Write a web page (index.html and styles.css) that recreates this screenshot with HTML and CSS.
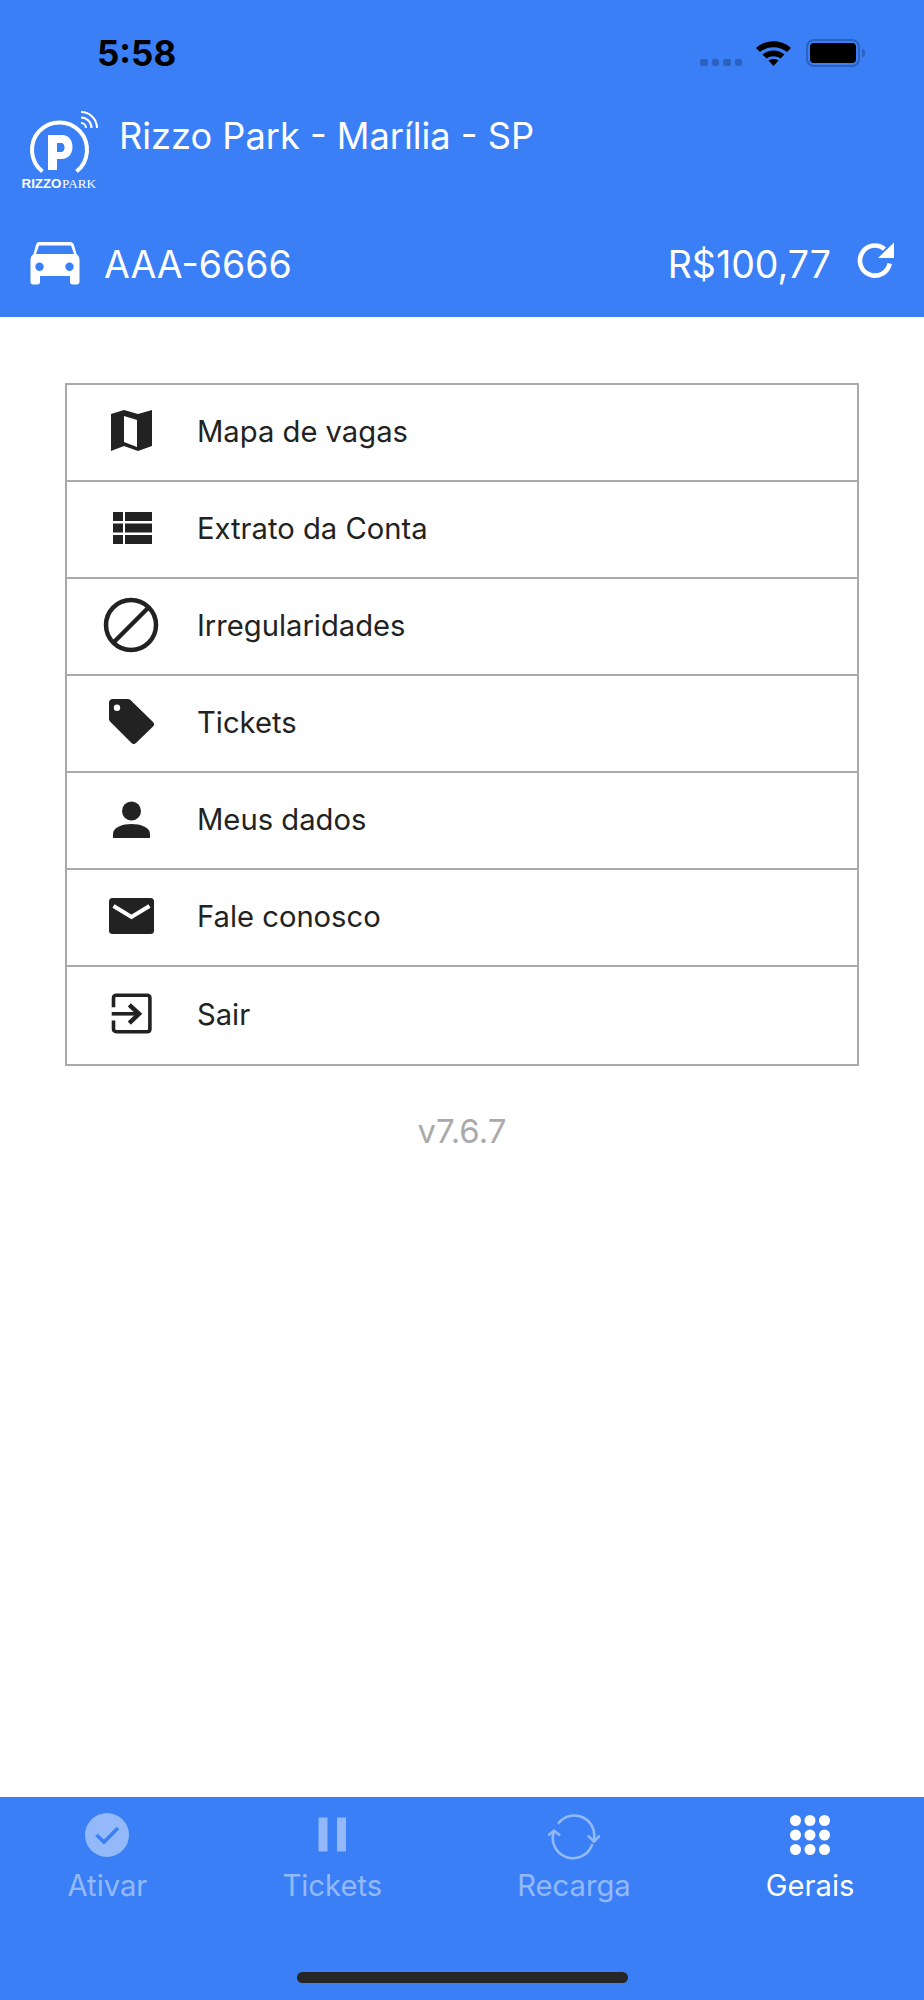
FILE: index.html
```html
<!DOCTYPE html>
<html lang="pt-BR">
<head>
<meta charset="UTF-8">
<title>Rizzo Park</title>
<link rel="stylesheet" href="styles.css">
</head>
<body>

<div class="app">
  <header class="top">
    <div class="status-bar">
      <span class="clock">5:58</span>
      <div class="status-icons">
        <div class="signal"><i></i><i></i><i></i><i></i></div>
        <svg class="wifi" width="37" height="28" viewBox="0 0 36 28">
          <path d="M0.5 9 C10 0 26 0 35.5 9 L31.5 13 C24 6.5 12 6.5 4.500 13 Z"/>
          <path d="M7 15.500 C13.500 10 22.500 10 29 15.500 L25 19.500 C21 16.500 15 16.500 11 19.500 Z"/>
          <path d="M13 21.500 C16 19.500 20 19.500 23 21.500 L18 27 Z"/>
        </svg>
        <div class="battery"><div class="battery-fill"></div></div>
      </div>
    </div>

    <div class="brand">
      <svg class="logo" width="80" height="80" viewBox="20 110 80 80">
        <path d="M42.500 171.500 A27.500 27.500 0 1 1 76.500 171.500" fill="none" stroke="#fff" stroke-width="4"/>
        <path fill="#fff" fill-rule="evenodd" d="M48 135 H62 C69 135 72.500 140 72.500 147 C72.500 154 68 159 62 159 H57 V170 H48 Z M57 143 V152 H61 C63.500 152 64.500 150 64.500 147.500 C64.500 145 63.500 143 61 143 Z"/>
        <g fill="none" stroke="#fff" stroke-width="2">
          <path d="M81 123 A5 5 0 0 1 86 128"/>
          <path d="M81 117.500 A10.500 10.500 0 0 1 91.500 128"/>
          <path d="M81 112 A16 16 0 0 1 97 128"/>
        </g>
        <text class="logo-bold" x="21.500" y="188" textLength="40" lengthAdjust="spacingAndGlyphs">RIZZO</text>
        <text class="logo-light" x="62" y="188" textLength="34" lengthAdjust="spacingAndGlyphs">PARK</text>
      </svg>
      <span class="brand-name">Rizzo Park - Marília - SP</span>
    </div>

    <div class="account">
      <svg class="car" width="50" height="44" viewBox="0 0 50 44">
        <path fill="#fff" fill-rule="evenodd" d="M9 1 H40 C42 1 43.500 2 44 4 L46.500 13 C48.500 14.500 49.500 16 49.500 19 V41 C49.500 42.500 48.500 43.500 47 43.500 H42.500 C41 43.500 40 42.500 40 41 V35 H10 V41 C10 42.500 9 43.500 7.500 43.500 H3 C1.500 43.500 0.500 42.500 0.500 41 V19 C0.500 16 1.500 14.500 3.500 13 L6 4 C6.500 2 7.500 1 9 1 Z M9 4.500 L6 13 H44 L41 4.500 Z M9.500 21.500 A4.200 4.200 0 1 0 9.500 29.900 A4.200 4.200 0 1 0 9.500 21.500 Z M39.500 21.500 A4.200 4.200 0 1 0 39.500 29.900 A4.200 4.200 0 1 0 39.500 21.500 Z"/>
      </svg>
      <span class="plate">AAA-6666</span>
      <span class="balance">R$100,77</span>
      <svg class="refresh" width="38" height="38" viewBox="0 0 38 38">
        <path fill="none" stroke="#fff" stroke-width="4.600" d="M27.500 8 A15 15 0 1 0 32.700 22.500"/>
        <path fill="#fff" d="M37 1.500 V17 H21 Z"/>
      </svg>
    </div>
  </header>

  <main class="content">
    <ul class="menu">
      <li class="menu-row">
        <svg class="menu-icon" viewBox="0 0 64 64">
          <path fill-rule="evenodd" d="M12 13 L25 9 L39 13 L53 9 V45 L39 50 L25 45 L12 50 Z M25 15 V41 L38 46 V19 Z"/>
        </svg>
        <span>Mapa de vagas</span>
      </li>
      <li class="menu-row">
        <svg class="menu-icon" viewBox="0 0 64 64">
          <path d="M14 14 H24 V23 H14 Z M26 14 H53 V23 H26 Z M14 25.500 H24 V34.500 H14 Z M26 25.500 H53 V34.500 H26 Z M14 37 H24 V46 H14 Z M26 37 H53 V46 H26 Z"/>
        </svg>
        <span>Extrato da Conta</span>
      </li>
      <li class="menu-row">
        <svg class="menu-icon" viewBox="0 0 64 64">
          <circle cx="32" cy="30" r="25" fill="none" stroke="#222" stroke-width="4.500"/>
          <path d="M14.500 47.500 L49.500 12.500" stroke="#222" stroke-width="4.500"/>
        </svg>
        <span>Irregularidades</span>
      </li>
      <li class="menu-row">
        <svg class="menu-icon" viewBox="0 0 64 64">
          <path fill-rule="evenodd" d="M14 7 H28 C30 7 31 7.500 32 8.500 L54 30 C55.500 31.500 55.500 33 54 34.500 L37 51 C35.500 52.500 34 52.500 32.500 51 L11.500 30 C10.500 29 10 28 10 26.500 V11 C10 8.500 11.500 7 14 7 Z M18 12.500 A3.200 3.200 0 1 0 18 18.900 A3.200 3.200 0 1 0 18 12.500 Z"/>
        </svg>
        <span>Tickets</span>
      </li>
      <li class="menu-row">
        <svg class="menu-icon" viewBox="0 0 64 64">
          <circle cx="32.500" cy="22" r="9.500"/>
          <path d="M14 49 V45 C14 38 24 35 32.500 35 S51 38 51 45 V49 Z"/>
        </svg>
        <span>Meus dados</span>
      </li>
      <li class="menu-row">
        <svg class="menu-icon" viewBox="0 0 64 64">
          <rect x="10" y="12" width="45" height="36" rx="3.500"/>
          <path d="M14.500 20 L32.500 31 L50.500 20" fill="none" stroke="#fff" stroke-width="4"/>
        </svg>
        <span>Fale conosco</span>
      </li>
      <li class="menu-row">
        <svg class="menu-icon" viewBox="0 0 64 64">
          <path fill="none" stroke="#222" stroke-width="3.600" d="M14.500 23.200 V14 C14.500 12.200 15.500 11.300 17.500 11.300 H48 C50 11.300 50.900 12.200 50.900 14 V45 C50.900 46.800 50 47.700 48 47.700 H17.500 C15.500 47.700 14.500 46.800 14.500 45 V36.500"/>
          <path fill="none" stroke="#222" stroke-width="3.600" d="M12.700 29.800 H39"/>
          <path fill="none" stroke="#222" stroke-width="4.500" d="M30.300 20.800 L40 29.800 L30.300 39.200"/>
        </svg>
        <span>Sair</span>
      </li>
    </ul>
    <p class="version">v7.6.7</p>
  </main>

  <footer class="tabs">
    <div class="tab">
      <svg class="tab-icon" viewBox="0 0 56 56">
        <circle cx="28" cy="28" r="22"/>
        <path d="M17.500 28 L25 35 L39 21" fill="none" stroke="#3a7ff6" stroke-width="3.600"/>
      </svg>
      <span>Ativar</span>
    </div>
    <div class="tab">
      <svg class="tab-icon" viewBox="0 0 56 56">
        <rect x="14.500" y="10.500" width="9" height="34"/>
        <rect x="33" y="10.500" width="9" height="34"/>
      </svg>
      <span>Tickets</span>
    </div>
    <div class="tab">
      <svg class="tab-icon" viewBox="0 0 56 56">
        <g fill="none" stroke="#fff" stroke-width="2.600" stroke-linecap="round" stroke-linejoin="round">
          <path d="M12.700 16 A20 20 0 0 1 48 32"/>
          <path d="M46 38 A20 20 0 0 1 8 24"/>
          <path d="M3 27.700 L8 23.700 L13.300 27.700"/>
          <path d="M42.700 29.300 L48 34.700 L53 29.300"/>
        </g>
      </svg>
      <span>Recarga</span>
    </div>
    <div class="tab tab-active">
      <svg class="tab-icon" viewBox="0 0 56 56">
        <circle cx="13.500" cy="13.500" r="5.500"/><circle cx="28" cy="13.500" r="5.500"/><circle cx="42.500" cy="13.500" r="5.500"/>
        <circle cx="13.500" cy="28" r="5.500"/><circle cx="28" cy="28" r="5.500"/><circle cx="42.500" cy="28" r="5.500"/>
        <circle cx="13.500" cy="42.500" r="5.500"/><circle cx="28" cy="42.500" r="5.500"/><circle cx="42.500" cy="42.500" r="5.500"/>
      </svg>
      <span>Gerais</span>
    </div>
    <div class="home-bar"></div>
  </footer>
</div>

</body>
</html>
```

FILE: styles.css
```css
body {
  margin: 0;
  font-family: Inter, "Liberation Sans", sans-serif;
  background: #fff;
}

.app {
  display: flex;
  flex-direction: column;
  height: 2000px;
}

/* header */
.top {
  height: 317px;
  box-sizing: border-box;
  background: #3a7ff6;
  color: #fff;
  flex-shrink: 0;
}

.status-bar {
  display: flex;
  justify-content: space-between;
  align-items: center;
  height: 72px;
  padding: 34px 64px 0 97px;
  box-sizing: border-box;
}

.clock {
  font-size: 35px;
  font-weight: 700;
  color: #000;
}

.status-icons {
  display: flex;
  align-items: center;
}

.signal {
  display: flex;
  gap: 4px;
  margin: 19px 13px 0 0;
}

.signal i {
  width: 7.5px;
  height: 7.5px;
  border-radius: 2px;
  background: #2c61bd;
}

.wifi {
  margin-right: 14px;
}

.battery {
  position: relative;
  width: 54px;
  height: 28px;
  box-sizing: border-box;
  padding: 2px;
  border: 2px solid #2c61bd;
  border-radius: 8px;
}

.battery::after {
  content: "";
  position: absolute;
  right: -7px;
  top: 8px;
  width: 3px;
  height: 8px;
  border-radius: 0 3px 3px 0;
  background: #2c61bd;
}

.battery-fill {
  height: 100%;
  border-radius: 4px;
  background: #000;
}

.brand {
  display: flex;
  align-items: flex-start;
  height: 80px;
  margin-top: 38px;
  padding-left: 20px;
}

.logo-bold {
  font-family: "Liberation Sans", sans-serif;
  font-size: 12px;
  font-weight: 700;
  fill: #fff;
}

.logo-light {
  font-family: "Liberation Serif", serif;
  font-size: 12px;
  fill: #fff;
}

.brand-name {
  margin: 4px 0 0 19px;
  font-size: 36.2px;
  line-height: 44px;
}

.account {
  display: flex;
  align-items: center;
  height: 50px;
  margin-top: 49px;
  padding: 0 29px 0 30px;
}

.car {
  margin-top: -3px;
}

.plate {
  margin-left: 24px;
  font-size: 37.5px;
}

.balance {
  margin-left: auto;
  font-size: 37.5px;
}

.refresh {
  margin: -8px 0 0 26px;
}

/* menu */
.content {
  flex: 1;
  padding: 66px 65px 0;
}

.menu {
  list-style: none;
  margin: 0;
  padding: 0;
  border: 2px solid #aaa;
}

.menu-row {
  display: flex;
  align-items: center;
  height: 95px;
  border-bottom: 2px solid #aaa;
  font-size: 29.2px;
  color: #222;
}

.menu-row span {
  margin-bottom: 2px;
}

.menu-row:last-child {
  height: 97px;
  border-bottom: 0;
}

.menu-icon {
  width: 64px;
  height: 64px;
  margin: 0 34px 0 32px;
  fill: #222;
  flex-shrink: 0;
}

.version {
  margin: 45px 0 0;
  text-align: center;
  font-size: 33px;
  color: #aaa;
}

/* bottom tabs */
.tabs {
  position: relative;
  display: flex;
  justify-content: space-around;
  align-items: flex-start;
  height: 203px;
  padding-right: 2px;
  box-sizing: border-box;
  background: #3a7ff6;
  flex-shrink: 0;
}

.tab {
  display: flex;
  flex-direction: column;
  align-items: center;
  font-size: 29.2px;
  color: #fff;
  opacity: 0.45;
}

.tab-active {
  opacity: 1;
}

.tab-icon {
  width: 56px;
  height: 56px;
  margin-top: 10px;
  fill: #fff;
}

.tab span {
  margin-top: 5px;
}

.home-bar {
  position: absolute;
  left: 297px;
  bottom: 17px;
  width: 331px;
  height: 11px;
  border-radius: 6px;
  background: #262626;
}
```
